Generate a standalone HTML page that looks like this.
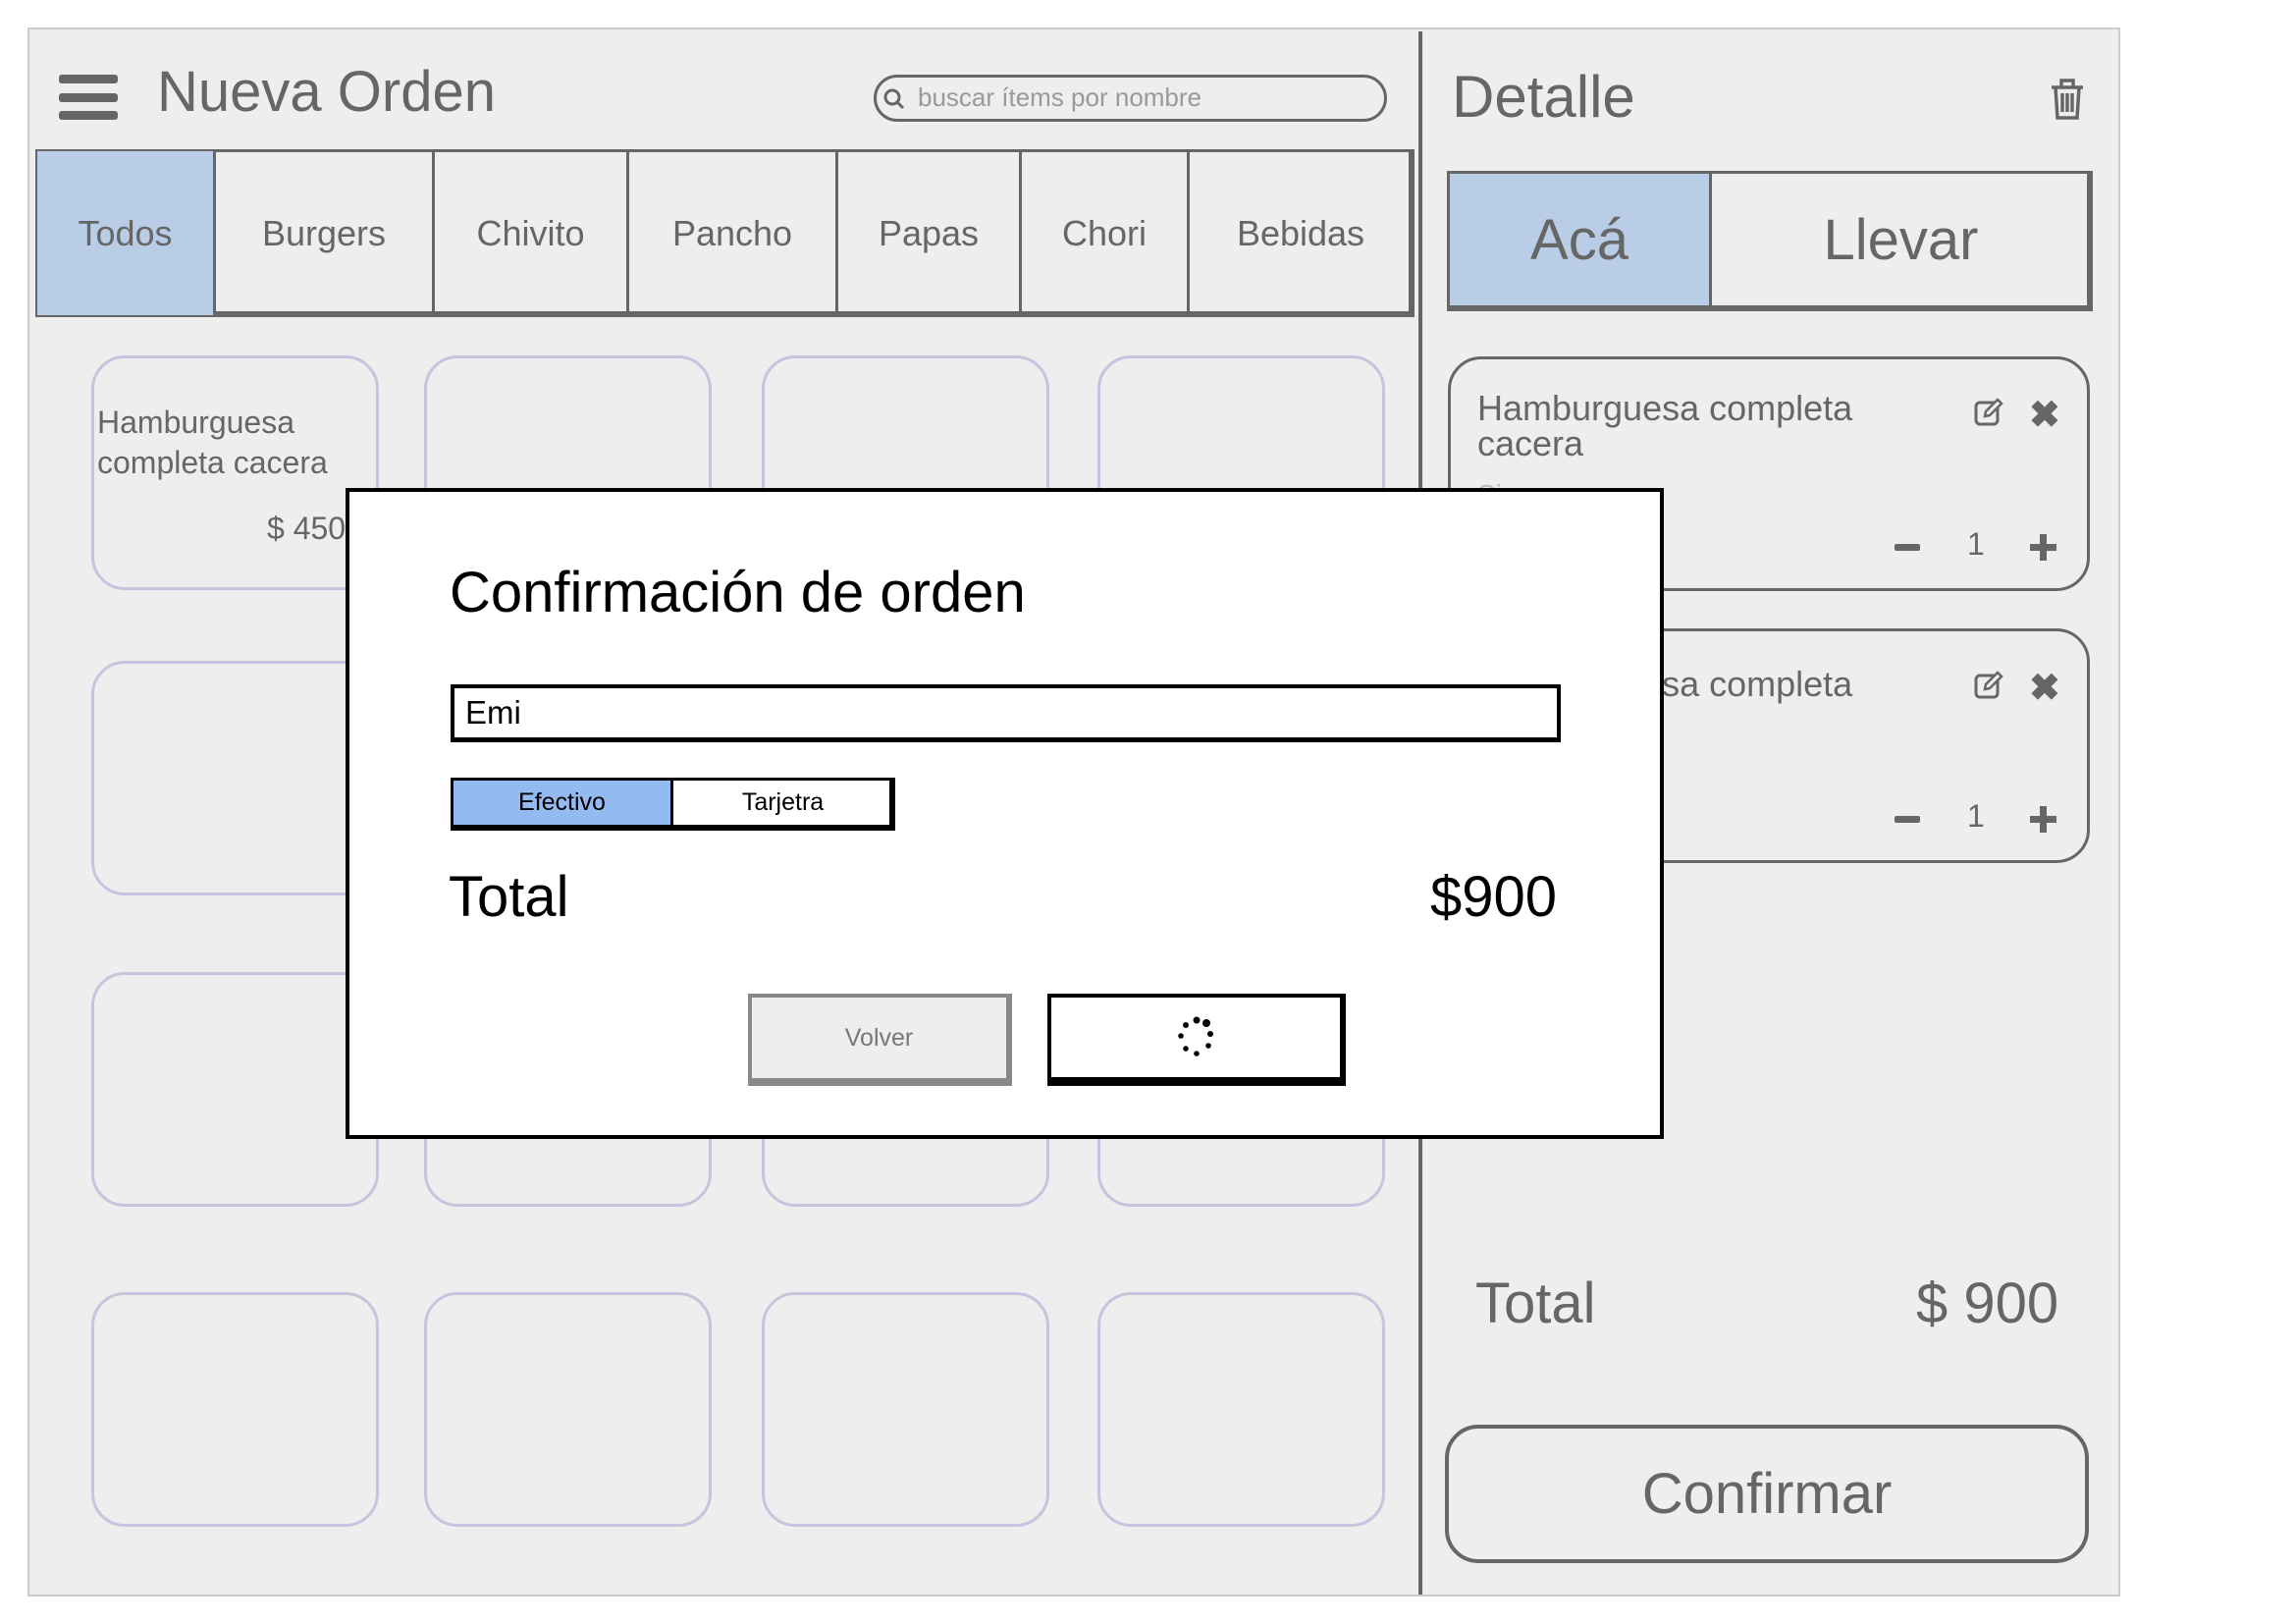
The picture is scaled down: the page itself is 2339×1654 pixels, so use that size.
<!DOCTYPE html>
<html><head><meta charset="utf-8"><style>
*{margin:0;padding:0;box-sizing:border-box}
body{width:2339px;height:1654px;background:#fff;position:relative;overflow:hidden;font-family:"Liberation Sans",sans-serif;color:#666}
.a{position:absolute}
.card{position:absolute;border:3px solid #c9c3dd;border-radius:34px;width:293px;height:239px}
.t{position:absolute;white-space:nowrap}
.tab{position:absolute;top:154px;height:167px;border-right:3px solid #666;font-size:36px;display:flex;align-items:center;justify-content:center;color:#666}
.ic{position:absolute;font-weight:bold;color:#666}
#rp{position:absolute;left:-5px;top:0;width:2339px;height:1654px}
</style></head><body>
<div class="a" style="left:28px;top:28px;width:2132px;height:1598px;background:#eee;border:2px solid #ccc"></div>
<div class="a" style="left:1445px;top:32px;width:4px;height:1592px;background:#666"></div>

<!-- header -->
<div class="a" style="left:60px;top:76px;width:60px;height:9px;background:#666;border-radius:3px"></div>
<div class="a" style="left:60px;top:95px;width:60px;height:9px;background:#666;border-radius:3px"></div>
<div class="a" style="left:60px;top:113px;width:60px;height:9px;background:#666;border-radius:3px"></div>
<div class="t" style="left:160px;top:60px;font-size:58px;color:#666">Nueva Orden</div>
<div class="a" style="left:890px;top:76px;width:523px;height:48px;border:3px solid #666;border-radius:24px"></div>
<svg class="a" style="left:898px;top:88px" width="26" height="26"><circle cx="11" cy="11" r="7" fill="none" stroke="#666" stroke-width="3"/><line x1="16" y1="16" x2="22" y2="22" stroke="#666" stroke-width="3"/></svg>
<div class="t" style="left:935px;top:84px;font-size:26px;color:#999">buscar ítems por nombre</div>

<!-- tabs -->
<div class="a" style="left:36px;top:152px;width:1405px;height:171px;border:3px solid #666;border-bottom:6px solid #666;border-right:6px solid #666"></div>
<div class="tab" style="left:38px;width:182px;background:#b9cde6">Todos</div>
<div class="tab" style="left:220px;width:223px">Burgers</div>
<div class="tab" style="left:443px;width:198px">Chivito</div>
<div class="tab" style="left:641px;width:213px">Pancho</div>
<div class="tab" style="left:854px;width:187px">Papas</div>
<div class="tab" style="left:1041px;width:171px">Chori</div>
<div class="tab" style="left:1212px;width:226px;border-right:none">Bebidas</div>

<!-- cards -->
<div class="card" style="left:93px;top:362px"></div><div class="card" style="left:432px;top:362px"></div><div class="card" style="left:776px;top:362px"></div><div class="card" style="left:1118px;top:362px"></div>
<div class="card" style="left:93px;top:673px"></div><div class="card" style="left:432px;top:673px"></div><div class="card" style="left:776px;top:673px"></div><div class="card" style="left:1118px;top:673px"></div>
<div class="card" style="left:93px;top:990px"></div><div class="card" style="left:432px;top:990px"></div><div class="card" style="left:776px;top:990px"></div><div class="card" style="left:1118px;top:990px"></div>
<div class="card" style="left:93px;top:1316px"></div><div class="card" style="left:432px;top:1316px"></div><div class="card" style="left:776px;top:1316px"></div><div class="card" style="left:1118px;top:1316px"></div>
<div class="t" style="left:99px;top:410px;font-size:32px;line-height:41px;color:#666">Hamburguesa<br>completa cacera</div>
<div class="t" style="left:272px;top:520px;font-size:32px;color:#666">$ 450</div>

<!-- right panel -->
<div id="rp">
<div class="t" style="left:1484px;top:64px;font-size:60px;color:#666">Detalle</div>
<svg class="a" style="left:2092px;top:78px" width="38" height="46"><path d="M3 11H35M13 11V4H25V11M7 11L9 42H29L31 11M14 17V36M19 17V36M24 17V36" fill="none" stroke="#666" stroke-width="3.5"/></svg>
<div class="a" style="left:1479px;top:174px;width:658px;height:143px;border:3px solid #666;border-right:6px solid #666;border-bottom:6px solid #666"></div>
<div class="a" style="left:1482px;top:177px;width:267px;height:134px;background:#b9cde6;border-right:3px solid #666;display:flex;align-items:center;justify-content:center;font-size:58px;color:#666">Acá</div>
<div class="a" style="left:1752px;top:177px;width:379px;height:134px;display:flex;align-items:center;justify-content:center;font-size:58px;color:#666">Llevar</div>

<div class="a" style="left:1480px;top:363px;width:654px;height:239px;border:3px solid #666;border-radius:34px"></div>
<div class="t" style="left:1510px;top:398px;font-size:36px;line-height:36px">Hamburguesa completa<br>cacera</div>
<div class="t" style="left:1510px;top:488px;font-size:28px;color:#bbb">Sin mayonesa</div>
<div class="a" style="left:1480px;top:640px;width:654px;height:239px;border:3px solid #666;border-radius:34px"></div>
<div class="t" style="left:1510px;top:676px;font-size:36px">Hamburguesa completa</div>
<div class="t" style="left:1510px;top:768px;font-size:28px;color:#bbb">Sin mayonesa</div>

<svg class="a" style="left:2016px;top:404px" width="32" height="30"><rect x="2" y="6" width="22" height="22" rx="4" fill="none" stroke="#666" stroke-width="3"/><path d="M11 20L12 15L24 3L28 7L16 19Z" fill="#eee" stroke="#666" stroke-width="2.5"/></svg>
<div class="ic" style="left:2072px;top:400px;font-size:38px">✖</div>
<svg class="a" style="left:2016px;top:682px" width="32" height="30"><rect x="2" y="6" width="22" height="22" rx="4" fill="none" stroke="#666" stroke-width="3"/><path d="M11 20L12 15L24 3L28 7L16 19Z" fill="#eee" stroke="#666" stroke-width="2.5"/></svg>
<div class="ic" style="left:2072px;top:678px;font-size:38px">✖</div>

<div class="a" style="left:1935px;top:554px;width:26px;height:7px;background:#666;border-radius:2px"></div>
<div class="t" style="left:2009px;top:536px;font-size:32px">1</div>
<div class="a" style="left:2073px;top:554px;width:27px;height:7px;background:#666"></div><div class="a" style="left:2083px;top:544px;width:7px;height:27px;background:#666"></div>
<div class="a" style="left:1935px;top:831px;width:26px;height:7px;background:#666;border-radius:2px"></div>
<div class="t" style="left:2009px;top:813px;font-size:32px">1</div>
<div class="a" style="left:2073px;top:831px;width:27px;height:7px;background:#666"></div><div class="a" style="left:2083px;top:821px;width:7px;height:27px;background:#666"></div>

<div class="t" style="left:1508px;top:1294px;font-size:58px">Total</div>
<div class="t" style="left:1957px;top:1294px;font-size:58px">$ 900</div>
<div class="a" style="left:1477px;top:1451px;width:656px;height:141px;border:4px solid #666;border-radius:34px;display:flex;align-items:center;justify-content:center;font-size:58px;color:#666">Confirmar</div>
</div>

<!-- modal -->
<div class="a" style="left:352px;top:497px;width:1343px;height:663px;background:#fff;border:4px solid #000"></div>
<div class="t" style="left:458px;top:570px;font-size:58px;color:#000">Confirmación de orden</div>
<div class="a" style="left:459px;top:697px;width:1131px;height:59px;border:4px solid #000;border-bottom-width:5px"></div>
<div class="t" style="left:474px;top:707px;font-size:33px;color:#000">Emi</div>
<div class="a" style="left:459px;top:792px;width:453px;height:54px;border:3px solid #000;border-right:6px solid #000;border-bottom:6px solid #000"></div>
<div class="a" style="left:462px;top:795px;width:224px;height:45px;background:#93bbf1;border-right:3px solid #000;display:flex;align-items:center;justify-content:center;font-size:25px;color:#000">Efectivo</div>
<div class="a" style="left:689px;top:795px;width:217px;height:45px;display:flex;align-items:center;justify-content:center;font-size:25px;color:#000">Tarjetra</div>
<div class="t" style="left:457px;top:880px;font-size:58px;color:#000">Total</div>
<div class="t" style="left:1457px;top:880px;font-size:58px;color:#000">$900</div>
<div class="a" style="left:762px;top:1012px;width:269px;height:94px;background:#eee;border:4px solid #888;border-right:6px solid #888;border-bottom:8px solid #888;display:flex;align-items:center;justify-content:center;font-size:25px;color:#777">Volver</div>
<div class="a" style="left:1067px;top:1012px;width:304px;height:94px;border:4px solid #000;border-right:6px solid #000;border-bottom:9px solid #000"></div>
<svg class="a" style="left:1193px;top:1033px" width="52" height="52"><g fill="#000"><circle cx="26" cy="6" r="3.5"/><circle cx="36" cy="9" r="4"/><circle cx="40" cy="20" r="3"/><circle cx="38" cy="32" r="2.8"/><circle cx="26" cy="40" r="2.8"/><circle cx="15" cy="35" r="2.8"/><circle cx="10" cy="22" r="2.8"/><circle cx="15" cy="11" r="3"/></g></svg>
</body></html>
